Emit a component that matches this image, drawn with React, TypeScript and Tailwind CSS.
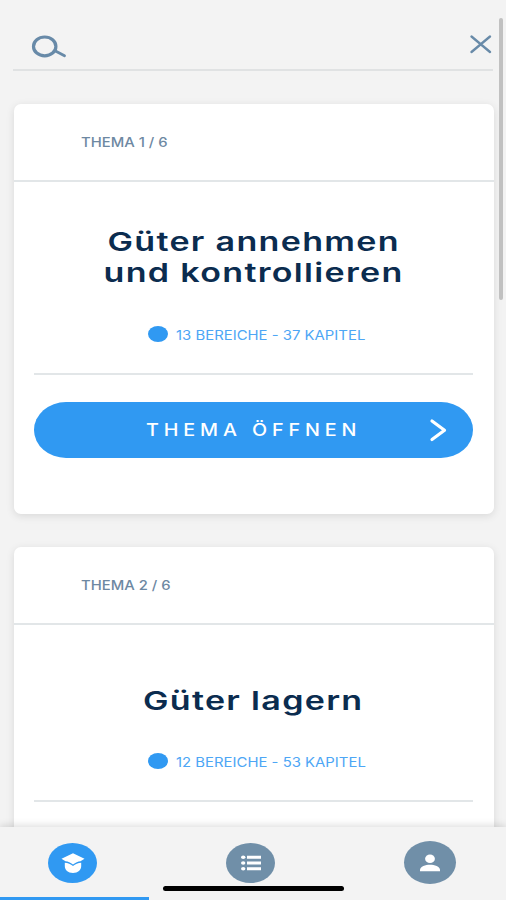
/**
 * App — Lernthemen-Übersicht mit Suchleiste, Themenkarten und Tab-Navigation.
 */

import type { ReactNode } from 'react';

interface Thema {
  nummer: number;
  titel: string[];
  bereiche: number;
  kapitel: number;
  aktion?: string;
}

const TOTAL = 6;

const THEMEN: Thema[] = [
  { nummer: 1, titel: ['Güter annehmen', 'und kontrollieren'], bereiche: 13, kapitel: 37, aktion: 'THEMA ÖFFNEN' },
  { nummer: 2, titel: ['Güter lagern'], bereiche: 12, kapitel: 53 },
];

function SearchBar() {
  return (
    <header className="mx-[13px] flex h-[71px] shrink-0 items-start justify-between border-b-2 border-[#e0e2e3] pt-[34px] text-[#688aa8]">
      <svg width="36" height="26" viewBox="0 0 36 26" fill="none" stroke="currentColor" className="ml-[18px]">
        <ellipse cx="13.7" cy="12.4" rx="11.2" ry="9.4" strokeWidth="3.2" />
        <path d="M24 16.800 33.500 21.800" strokeWidth="2.800" strokeLinecap="round" />
      </svg>
      <svg width="22" height="20" viewBox="0 0 22 20" fill="none" stroke="currentColor" strokeWidth="2.3" strokeLinecap="round" className="mr-px">
        <path d="M1.500 2.500 20 18M20 2.500 1.500 18" />
      </svg>
    </header>
  );
}

function ThemaCard({ thema }: { thema: Thema }) {
  const einzeilig = thema.titel.length === 1;

  return (
    <article className="h-[410px] shrink-0 rounded-[7px] bg-white shadow-[0_2px_9px_rgba(0,0,0,0.11)]">
      <div className="flex h-[78px] items-center border-b-2 border-[#e2e6e8] pt-[2px] pl-[67px]">
        <span className="origin-left scale-x-[1.14] text-[13px] font-medium whitespace-nowrap text-[#6d88a2]">
          THEMA {thema.nummer} / {TOTAL}
        </span>
      </div>

      <div className="pr-[21px] pl-5">
        <h2 className={`${einzeilig ? 'pt-[60px] pb-[36px]' : 'pt-[44px] pb-[37px]'} flex flex-col items-center text-[26px] leading-[31px] font-semibold tracking-[1px] text-[#0b2c4f]`}>
          {thema.titel.map((zeile) => (
            <span key={zeile} className="scale-x-[1.31] whitespace-nowrap">{zeile}</span>
          ))}
        </h2>

        <div className="flex h-[50px] items-start border-b-2 border-[#e2e6e8] pl-[114px]">
          <span className="mt-px h-4 w-[20px] shrink-0 rounded-[50%] bg-[#3099f2]" />
          <span className="ml-[8px] origin-left scale-x-[1.145] text-[13px] leading-5 whitespace-nowrap text-[#4da6f5]">
            {thema.bereiche} BEREICHE - {thema.kapitel} KAPITEL
          </span>
        </div>

        {thema.aktion && (
          <button className="mt-[27px] flex h-[56px] w-full items-center rounded-[32px/28px] bg-[#3099f2] text-white">
            <span className="ml-[112px] origin-left scale-x-[1.16] pt-[2px] text-[17px] font-medium tracking-[4.2px] whitespace-nowrap">
              {thema.aktion}
            </span>
            <svg width="18" height="24" viewBox="0 0 18 24" fill="none" stroke="currentColor" strokeWidth="3.2" strokeLinecap="round" strokeLinejoin="round" className="mr-[26px] ml-auto">
              <path d="M3 3 15.500 12.300 3 21.500" />
            </svg>
          </button>
        )}
      </div>
    </article>
  );
}

function TabIcon({ className, children }: { className: string; children: ReactNode }) {
  return (
    <button className={`flex items-center justify-center rounded-[50%] text-white ${className}`}>
      {children}
    </button>
  );
}

function TabBar() {
  return (
    <nav className="relative flex h-[73px] shrink-0 items-start justify-between bg-[#f3f3f3] pr-[50px] pl-[48px] shadow-[0_-2px_7px_rgba(0,0,0,0.13)]">
      <TabIcon className="mt-[16px] h-10 w-[49px] bg-[#3099f2]">
        <svg width="26" height="22" viewBox="0 0 26 22" fill="currentColor">
          <path d="M13 1.200 24.500 6.800 20.500 9.200C18 9.400 15.500 10.500 13 12.500 10.500 10.500 8 9.400 5.500 9.200L1.500 6.800z" />
          <path d="M4.800 10.700c3 .2 6 1.300 8.200 3.300 2.200-2 5.200-3.100 8.200-3.300V14c0 4-3.200 7-8.200 7s-8.200-3-8.200-7z" />
        </svg>
      </TabIcon>
      <TabIcon className="mt-[16px] h-10 w-[49px] bg-[#708fa8]">
        <svg width="20" height="16" viewBox="0 0 20 16" fill="currentColor">
          <ellipse cx="2.200" cy="2.300" rx="2.200" ry="1.800" />
          <ellipse cx="2.200" cy="8" rx="2.200" ry="1.800" />
          <ellipse cx="2.200" cy="13.700" rx="2.200" ry="1.800" />
          <path d="M6 .8h14v3H6zM6 6.500h14v3H6zM6 12.200h14v3H6z" />
        </svg>
      </TabIcon>
      <TabIcon className="mt-[14px] h-[43px] w-[52px] bg-[#708fa8]">
        <svg width="20" height="18" viewBox="0 0 20 18" fill="currentColor">
          <ellipse cx="10" cy="4.800" rx="4.900" ry="4.300" />
          <path d="M0 17.300v-1.500C0 12.700 5.500 10.800 10 10.800s10 1.900 10 5v1.500z" />
        </svg>
      </TabIcon>

      {/* home indicator and active tab marker */}
      <span className="absolute top-[59px] left-[163px] h-[5px] w-[181px] rounded-full bg-black" />
      <span className="absolute bottom-0 left-0 h-[3px] w-[149px] bg-[#3099f2]" />
    </nav>
  );
}

export default function App() {
  return (
    <div className="relative flex h-[900px] w-[506px] flex-col overflow-hidden bg-[#f3f3f3] font-['Inter',sans-serif]">
      <SearchBar />
      <main className="flex min-h-0 flex-1 flex-col gap-[33.500px] overflow-hidden pt-[32.500px] pr-[12.500px] pl-[14px]">
        {THEMEN.map((thema) => (
          <ThemaCard key={thema.nummer} thema={thema} />
        ))}
      </main>
      <TabBar />
      <div className="absolute top-[18px] right-[3px] h-[282px] w-[4px] rounded-full bg-[#c1c1c1]" />
    </div>
  );
}
